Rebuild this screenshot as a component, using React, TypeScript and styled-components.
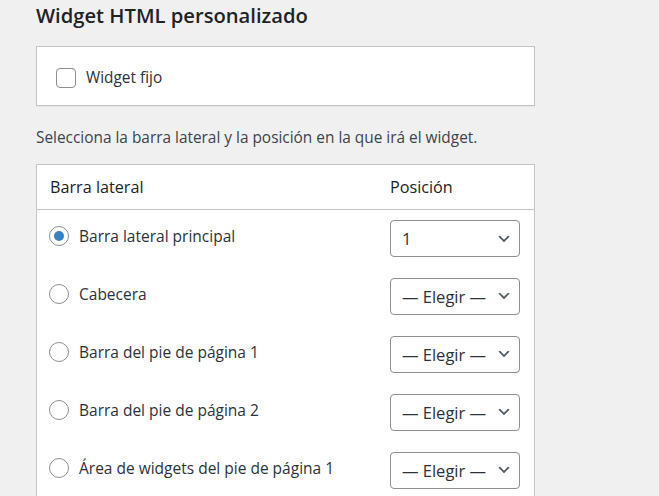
import React, { useState } from "react";
import styled, { createGlobalStyle } from "styled-components";

const GlobalStyle = createGlobalStyle`
  html, body {
    margin: 0;
    padding: 0;
    background: #f0f0f1;
    font-family: "Open Sans", "Noto Sans", sans-serif;
    color: #2c3338;
  }
`;

const Page = styled.div`
  padding: 0 124px 0 36px;
  width: 499px;
`;

const Title = styled.h2`
  margin: 0;
  padding-top: 2px;
  height: 44px;
  font-size: 20.2px;
  font-weight: 600;
  color: #1d2327;
  line-height: 26px;
`;

const Card = styled.div`
  background: #fff;
  border: 1px solid #c3c4c7;
  box-shadow: 0 1px 1px rgba(0, 0, 0, 0.04);
`;

const CheckRow = styled.label`
  display: flex;
  align-items: center;
  gap: 10px;
  height: 58px;
  padding: 3px 19px 0;
  box-sizing: border-box;
  font-size: 15.4px;
`;

const CheckBox = styled.span`
  width: 18px;
  height: 18px;
  border: 1px solid #8c8f94;
  border-radius: 4px;
  background: #fff;
  flex: none;
`;

const Description = styled.p`
  margin: 0;
  height: 58px;
  padding-top: 4px;
  box-sizing: border-box;
  display: flex;
  align-items: center;
  font-size: 15.4px;
  color: #3c434a;
`;

const Table = styled.table`
  width: 100%;
  border-collapse: collapse;
  background: #fff;
  border: 1px solid #c3c4c7;
  font-size: 15.5px;
`;

const HeadCell = styled.th<{ $pos?: boolean }>`
  text-align: left;
  font-weight: 400;
  font-size: 16.2px;
  height: 44px;
  padding: ${(p) => (p.$pos ? "0 14px 0 0" : "0 13px")};
  width: ${(p) => (p.$pos ? "130px" : "auto")};
  border-bottom: 1px solid #c3c4c7;
  color: #1d2327;
`;

const Cell = styled.td<{ $pos?: boolean }>`
  height: 58px;
  box-sizing: border-box;
  vertical-align: top;
  padding: ${(p) => (p.$pos ? "10px 14px 0 0" : "16px 13px 0 12px")};
`;

const RadioLabel = styled.label`
  display: flex;
  align-items: center;
  gap: 10px;
  cursor: pointer;
  line-height: 20px;
`;

const Radio = styled.span<{ $checked: boolean }>`
  width: 18px;
  height: 18px;
  border: 1px solid #8c8f94;
  border-radius: 50%;
  background: #fff;
  flex: none;
  display: flex;
  align-items: center;
  justify-content: center;
  &::after {
    content: "";
    width: 10px;
    height: 10px;
    border-radius: 50%;
    background: ${(p) => (p.$checked ? "#3582c4" : "transparent")};
  }
`;

const Select = styled.div`
  box-sizing: border-box;
  width: 130px;
  height: 37px;
  border: 1px solid #8c8f94;
  border-radius: 4px;
  display: flex;
  align-items: center;
  justify-content: space-between;
  padding: 0 7px 0 11px;
  font-size: 16.5px;
  color: #2c3338;
  background: #fff;
`;

const Chevron = () => (
  <svg width="16" height="16" viewBox="0 0 20 20">
    <path d="M5 6l5 5 5-5 2 1-7 7-7-7z" fill="#50575e" />
  </svg>
);

const areas = [
  "Barra lateral principal",
  "Cabecera",
  "Barra del pie de página 1",
  "Barra del pie de página 2",
  "Área de widgets del pie de página 1",
];

export default function App() {
  const [selected, setSelected] = useState(0);
  return (
    <Page>
      <GlobalStyle />
      <Title>Widget HTML personalizado</Title>
      <Card>
        <CheckRow>
          <CheckBox />
          Widget fijo
        </CheckRow>
      </Card>
      <Description>
        Selecciona la barra lateral y la posición en la que irá el widget.
      </Description>
      <Table>
        <thead>
          <tr>
            <HeadCell>Barra lateral</HeadCell>
            <HeadCell $pos>Posición</HeadCell>
          </tr>
        </thead>
        <tbody>
          {areas.map((a, i) => (
            <tr key={a}>
              <Cell>
                <RadioLabel onClick={() => setSelected(i)}>
                  <Radio $checked={selected === i} />
                  {a}
                </RadioLabel>
              </Cell>
              <Cell $pos>
                <Select>
                  <span>{i === selected ? "1" : "— Elegir —"}</span>
                  <Chevron />
                </Select>
              </Cell>
            </tr>
          ))}
        </tbody>
      </Table>
    </Page>
  );
}
